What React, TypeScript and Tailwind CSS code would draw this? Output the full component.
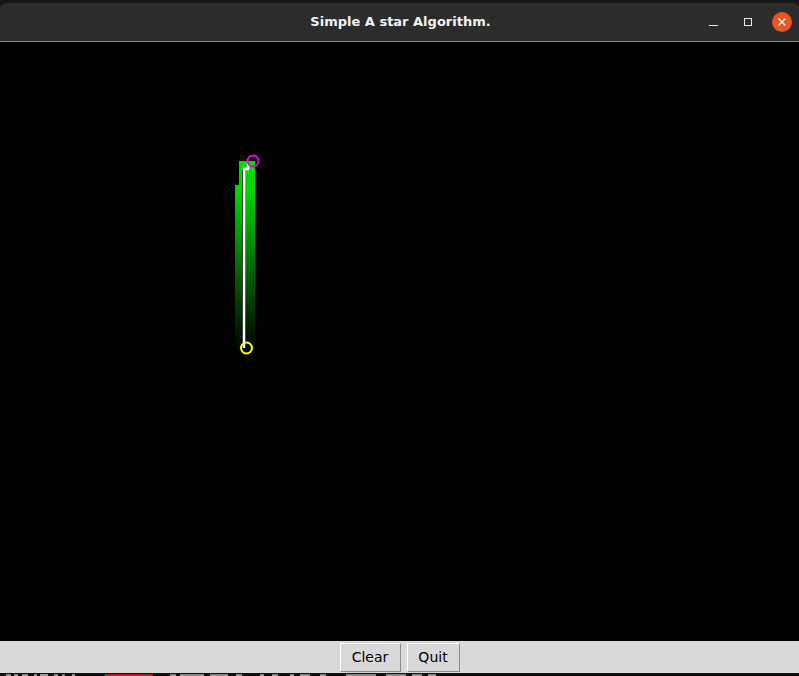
const blips = [
  [6, 5, "#8a8a8a"], [14, 4, "#8a8a8a"], [22, 6, "#8a8a8a"], [34, 3, "#8a8a8a"], [40, 8, "#9a9a9a"], [54, 4, "#8a8a8a"],
  [62, 3, "#7a7a7a"], [72, 3, "#8a8a8a"], [105, 48, "#c0102a"], [170, 6, "#8a8a8a"], [180, 24, "#8a8a8a"], [210, 18, "#8a8a8a"],
  [236, 6, "#8a8a8a"], [260, 4, "#8a8a8a"], [272, 6, "#8a8a8a"], [290, 4, "#8a8a8a"], [300, 10, "#8a8a8a"], [320, 6, "#8a8a8a"],
  [346, 30, "#8a8a8a"], [386, 20, "#8a8a8a"], [412, 10, "#8a8a8a"], [428, 8, "#8a8a8a"],
] as const;

export default function App() {
  return (
    <div className="w-[799px] h-[676px] bg-black flex flex-col overflow-hidden" style={{ fontFamily: '"DejaVu Sans", sans-serif' }}>
      {/* title bar */}
      <div className="h-[42px] bg-[#161616] flex flex-col">
        <div className="h-[3px]" />
        <div className="flex-1 bg-[#2c2c2c] rounded-t-[6px] border-b border-[#8a8a8a] relative flex items-center justify-center">
          <span className="text-[13px] font-bold text-[#f2f2f2] pl-[2px]">Simple A star Algorithm.</span>
          <div className="absolute right-[7px] top-0 bottom-0 flex items-center">
            <div className="w-[9px] h-[1px] bg-[#e8e8e8] mt-[7px]" />
            <div className="w-[8px] h-[8px] border border-[#e8e8e8] ml-[26px]" />
            <div className="w-[20px] h-[20px] rounded-full bg-[#e95420] flex items-center justify-center ml-[20px]">
              <svg width="10" height="10" viewBox="0 0 10 10">
                <path d="M1.5 1.5 L8.5 8.5 M8.5 1.5 L1.5 8.5" stroke="#ffffff" strokeWidth="1.4" />
              </svg>
            </div>
          </div>
        </div>
      </div>

      {/* canvas */}
      <div className="h-[599px] bg-black relative">
        <svg width="799" height="599" viewBox="0 42 799 599" className="absolute inset-0">
          <defs>
            <linearGradient id="fade" x1="0" y1="161" x2="0" y2="352" gradientUnits="userSpaceOnUse">
              <stop offset="0" stopColor="#00dc00" />
              <stop offset="0.15" stopColor="#00d800" />
              <stop offset="0.6" stopColor="#006000" />
              <stop offset="0.85" stopColor="#002200" />
              <stop offset="1" stopColor="#000000" />
            </linearGradient>
          </defs>
          <path d="M239 161 H255 V352 H235 V185 H239 Z" fill="url(#fade)" />
          <rect x="242" y="170" width="1" height="180" fill="#000" />
          <path d="M244 348 V169 H248 V163" stroke="#ffffff" strokeWidth="2.5" fill="none" />
          <circle cx="253" cy="161" r="5.5" stroke="#e600e6" strokeWidth="2" fill="none" />
          <circle cx="246.5" cy="348" r="5.5" stroke="#ffff00" strokeWidth="2" fill="none" />
        </svg>
      </div>

      {/* button bar */}
      <div className="h-[32px] bg-[#d9d9d9] flex items-start justify-center gap-[6px] pt-[2px]">
        <button className="w-[61px] h-[29px] bg-[#d9d9d9] border border-t-white border-l-white border-r-[#8c8c8c] border-b-[#8c8c8c] text-[14px] text-black">Clear</button>
        <button className="w-[53px] h-[29px] bg-[#d9d9d9] border border-t-white border-l-white border-r-[#8c8c8c] border-b-[#8c8c8c] text-[14px] text-black">Quit</button>
      </div>

      {/* terminal peeking below */}
      <div className="h-[3px] bg-[#101010] relative">
        {blips.map(([x, w, c], i) => (
          <div key={i} className="absolute top-[1px] h-[2px]" style={{ left: x, width: w, background: c }} />
        ))}
      </div>
    </div>
  );
}
